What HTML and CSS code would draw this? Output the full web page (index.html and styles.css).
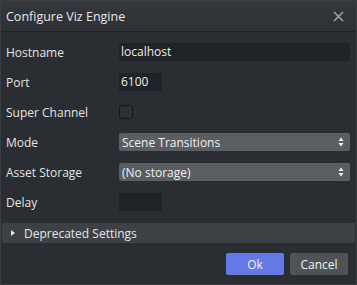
FILE: index.html
```html
<!DOCTYPE html>
<html lang="en">
<head>
  <meta charset="UTF-8" />
  <title>Configure Viz Engine</title>
  <link rel="stylesheet" href="styles.css">
</head>
<body>
  <div class="dialog">
    <div class="titlebar">
      <span class="title">Configure Viz Engine</span>
      <svg class="close" width="11" height="11" viewBox="0 0 11 11">
        <path d="M1 1 L10 10 M10 1 L1 10" stroke="#9a9ea3" stroke-width="1.7" />
      </svg>
    </div>

    <div class="form">
      <label>Hostname</label>
      <div class="field"><div class="input wide">localhost</div></div>

      <label>Port</label>
      <div class="field"><div class="input short">6100</div></div>

      <label>Super Channel</label>
      <div class="field"><div class="checkbox"></div></div>

      <label>Mode</label>
      <div class="field">
        <div class="select">
          <span>Scene Transitions</span>
          <svg width="6" height="10" viewBox="0 0 6 10"><path d="M3 0.5 L5.5 4 L0.5 4 Z M3 9.5 L5.5 6 L0.5 6 Z" fill="#f0f0f0"/></svg>
        </div>
      </div>

      <label>Asset Storage</label>
      <div class="field">
        <div class="select">
          <span>(No storage)</span>
          <svg width="6" height="10" viewBox="0 0 6 10"><path d="M3 0.5 L5.5 4 L0.5 4 Z M3 9.5 L5.5 6 L0.5 6 Z" fill="#f0f0f0"/></svg>
        </div>
      </div>

      <label>Delay</label>
      <div class="field"><div class="input short"></div></div>
    </div>

    <div class="section">
      <svg width="6" height="8" viewBox="0 0 6 8"><path d="M1 1 L5 4 L1 7 Z" fill="#e6e6e6"/></svg>
      <span>Deprecated Settings</span>
    </div>

    <div class="buttons">
      <button class="btn ok">Ok</button>
      <button class="btn cancel">Cancel</button>
    </div>
  </div>
</body>
</html>
```

FILE: styles.css
```css
body {
  margin: 0;
  background: #2a2d31;
  font-family: 'Open Sans', 'Noto Sans', sans-serif;
  font-size: 12px;
  color: #e4e4e4;
}

.dialog {
  width: 357px;
  height: 285px;
  box-sizing: border-box;
  border: 1px solid #3a3e43;
  background: #2a2d31;
  display: flex;
  flex-direction: column;
}

.titlebar {
  height: 30px;
  display: flex;
  align-items: center;
  justify-content: space-between;
  padding: 0 12px 0 5px;
  background: linear-gradient(#34383d, #2d3034);
  border-bottom: 1px solid #1d2024;
}

.title {
  font-size: 12.5px;
  color: #e8e8e8;
}

.form {
  display: grid;
  grid-template-columns: 113px 1fr;
  grid-auto-rows: 30px;
  padding: 5px 5px 0 5px;
  align-items: center;
}

label {
  color: #e4e4e4;
}

.field {
  display: flex;
}

.input {
  height: 18px;
  line-height: 18px;
  background: #1f2226;
  padding: 0 2px;
  box-sizing: border-box;
  color: #ececec;
}

.input.wide {
  width: 231px;
}

.input.short {
  width: 43px;
}

.checkbox {
  width: 14px;
  height: 14px;
  box-sizing: border-box;
  border: 1px solid #15171a;
  border-radius: 3px;
  background: #2c3035;
}

.select {
  width: 231px;
  height: 18px;
  box-sizing: border-box;
  background: #5a5e63;
  border-radius: 2px;
  display: flex;
  align-items: center;
  justify-content: space-between;
  padding: 0 6px 0 3px;
  color: #f0f0f0;
}

.section {
  margin: 6px 1px 0 1px;
  height: 20px;
  background: #3d4145;
  display: flex;
  align-items: center;
  gap: 8px;
  padding-left: 8px;
  color: #e6e6e6;
}

.buttons {
  display: flex;
  justify-content: flex-end;
  gap: 6px;
  padding: 10px 8px 0 0;
}

.btn {
  width: 58px;
  height: 22px;
  border: none;
  border-radius: 2px;
  font-family: inherit;
  font-size: 12px;
  color: #f4f4f4;
  padding: 0;
}

.ok {
  background: #6479e6;
}

.cancel {
  background: #4f5358;
}
```
